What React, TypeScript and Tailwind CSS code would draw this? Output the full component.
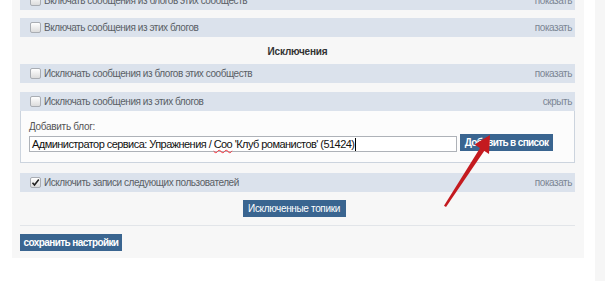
export default function App() {
  const rowCls =
    "flex h-[19px] items-center justify-between bg-[#dbe2ec] pl-[10px] pr-[3px] text-[10px] tracking-[-0.45px] text-[#5a5f66]";
  const btnCls = "h-[17px] bg-[#3a6590] text-[10px] whitespace-nowrap text-white";
  const box = (checked = false) => (
    <span className="mr-[3px] flex h-[11px] w-[11px] items-center justify-center rounded-[2px] border border-[#a9adb3] bg-gradient-to-b from-white to-[#dcdcdc]">
      {checked && (
        <svg width="9" height="9" viewBox="0 0 9 9">
          <path d="M1.5 4.8 L3.5 7 L7.8 1.5" fill="none" stroke="#222" strokeWidth="1.6" />
        </svg>
      )}
    </span>
  );
  const link = (t: string) => <span className="text-[#7b8694]">{t}</span>;

  return (
    <div className="relative h-[281px] w-[605px] overflow-hidden bg-white" style={{ fontFamily: '"Liberation Sans", Arial, sans-serif' }}>
      <div className="flex h-full">
        <div className="ml-[12px] mt-[-9px] h-[267px] w-[572px] bg-[#f7f7f7] pl-[8px] pr-[9px]">
          <div className={rowCls}>
            <span className="flex items-center">{box()}Включать сообщения из блогов этих сообществ</span>
            {link("показать")}
          </div>
          <div className={`${rowCls} mt-[8px]`}>
            <span className="flex items-center">{box()}Включать сообщения из этих блогов</span>
            {link("показать")}
          </div>
          <div className="flex h-[27px] items-center justify-center pt-[2px] text-[10px] font-bold tracking-[-0.2px] text-[#333]">Исключения</div>
          <div className={rowCls}>
            <span className="flex items-center">{box()}Исключать сообщения из блогов этих сообществ</span>
            {link("показать")}
          </div>
          <div className={`${rowCls} mt-[9px]`}>
            <span className="flex items-center">{box()}Исключать сообщения из этих блогов</span>
            {link("скрыть")}
          </div>
          <div className="h-[52px] border border-t-0 border-[#ccd4de] bg-[#fcfcfc] pl-[8px] pt-[9px]">
            <div className="text-[10px] leading-[13px] tracking-[-0.3px] text-[#555]">Добавить блог:</div>
            <div className="mt-[3px] flex items-center">
              <div className="flex h-[16px] w-[428px] items-center whitespace-nowrap border border-[#aeb2b8] bg-white pl-[2px] text-[11px] tracking-[-0.55px] text-[#111]">
                Администратор сервиса: Упражнения /&nbsp;<span className="underline decoration-wavy decoration-red-500 decoration-1">Соо</span>&nbsp;'Клуб романистов' (51424)
                <span className="ml-[1px] h-[13px] w-[1px] bg-black" />
              </div>
              <button className={`${btnCls} ml-[3px] mt-[-3px] w-[93px] font-bold tracking-[-0.65px]`}>Добавить в список</button>
            </div>
          </div>
          <div className={`${rowCls} mt-[10px]`}>
            <span className="flex items-center">{box(true)}Исключить записи следующих пользователей</span>
            {link("показать")}
          </div>
          <div className="mt-[8px] flex justify-center">
            <button className={`${btnCls} ml-[-7px] w-[103px] tracking-[-0.35px]`}>Исключенные топики</button>
          </div>
          <div className="mt-[8px] h-px bg-[#e2e5e9]" />
          <button className={`${btnCls} mt-[8px] w-[102px] font-bold tracking-[-0.6px]`}>сохранить настройки</button>
        </div>
        <div className="ml-[11px] h-full w-[10px] bg-[#f6f6f6]" />
      </div>
      <svg className="absolute left-0 top-0" width="605" height="281">
        <polygon points="446,207 484.5,150.5 480.2,147.8 444,205.8" fill="#c41a1f" />
        <polygon points="490,135 489,154 474.5,144.5" fill="#c41a1f" />
      </svg>
    </div>
  );
}
